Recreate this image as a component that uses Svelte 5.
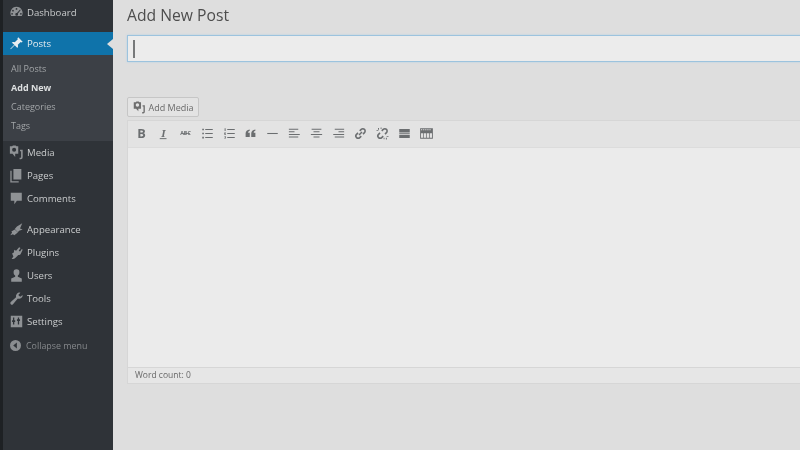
<script>
  const top = [
    { label: 'Media', icon: 'media' },
    { label: 'Pages', icon: 'pages' },
    { label: 'Comments', icon: 'comments' }
  ];
  const bottom = [
    { label: 'Appearance', icon: 'appearance' },
    { label: 'Plugins', icon: 'plugins' },
    { label: 'Users', icon: 'users' },
    { label: 'Tools', icon: 'tools' },
    { label: 'Settings', icon: 'settings' }
  ];
  const subs = ['All Posts', 'Add New', 'Categories', 'Tags'];
  const paths = {
    media: 'M1 1.500h2.500l1-1h3l1 1H10.500V10H7v3.500L4 10H1zM5.800 3a2.300 2.300 0 1 0 0 4.600 2.300 2.300 0 0 0 0-4.600zM12.500 5.500H15.500V14a2.200 2.200 0 0 1-2.200 2.200H12V14.500h1.200c.3 0 .5-.2.5-.5V7.200h-1.200z',
    pages: 'M5 1h9v12H5zM3 3v12h8v1.500H1.500V3z',
    comments: 'M2 2h12.500v9H9l-3 4v-4H2z',
    appearance: 'M9 5l6-3.500-2.500 6 3 1-4 1.500-1.500 1.500-3.500-3.500zM6.500 8.500l3.500 3.500-4 3-1.500-1-3 1 2-3-.8-1.200z',
    plugins: 'M11.500 2.500l1.500 1-2 3 1.500 1 2-3 1 1-2 4c-.5 1.500-2 2-3 1.800L8 14c-1 1.500-3 2-5 2l2-3-1.500-3.500 2-1 .5-3 2 1z',
    users: 'M8.500 1.500a3.300 3.300 0 0 1 3.300 3.500c0 1.500-1 3-1.800 3.500v1.500l4.500 2V15.500H2.500V12l4.500-2V8.500C6 8 5.200 6.500 5.200 5a3.300 3.300 0 0 1 3.300-3.500z',
    tools: 'M15.500 4.500a4 4 0 0 1-5.500 4L4.500 15a1.700 1.700 0 0 1-2.500-2.500L8 7a4 4 0 0 1 5-5l-2.500 2.500 2.200 2z',
    settings: 'M2 2h13v13H2zM4.500 4v3H3.500v2h1v3H6V9h1V7H6V4zM10 4v2H9v2h1v4h1.500V8h1V6h-1V4z'
  };
  const tools = ['b','i','abc','ul','ol','q','hr','al','ac','ar','link','unlink','more','kitchen'];
</script>

<div class="page">
  <nav class="side">
    <div class="item first">
      <svg class="ic" viewBox="0 0 17 17"><path d="M8.500 2a7 7 0 0 0-6 10.500h12A7 7 0 0 0 8.500 2zM8.500 3.500a1 1 0 1 1 0 2 1 1 0 0 1 0-2zM4.500 5.500a1 1 0 1 1 0 2 1 1 0 0 1 0-2zM12.500 5l.8.6L10 10a1.500 1.500 0 1 1-1-.8zM3.500 9a1 1 0 1 1 0 2 1 1 0 0 1 0-2zM13.500 9a1 1 0 1 1 0 2 1 1 0 0 1 0-2z" fill-rule="evenodd"/></svg>
      <span>Dashboard</span>
    </div>
    <div class="item current">
      <svg class="ic" viewBox="0 0 17 17"><path d="M10.500 1.500l5 5-1.200.8-1-.5L10 10c.5 1.500.2 2.500-.5 3.500L6.500 10.500 2 15l-.5-.5L6 10 3 7.500c1-.8 2-1 3.500-.5L10 3.700l-.5-1z"/></svg>
      <span>Posts</span>
      <i class="arrow"></i>
    </div>
    <div class="subs">
      {#each subs as s}
        <div class="sub" class:on={s === 'Add New'}>{s}</div>
      {/each}
    </div>
    {#each top as m}
      <div class="item">
        <svg class="ic" viewBox="0 0 17 17"><path d={paths[m.icon]} fill-rule="evenodd"/></svg>
        <span>{m.label}</span>
      </div>
    {/each}
    <div class="gap"></div>
    {#each bottom as m}
      <div class="item">
        <svg class="ic" viewBox="0 0 17 17"><path d={paths[m.icon]} fill-rule="evenodd"/></svg>
        <span>{m.label}</span>
      </div>
    {/each}
    <div class="collapse">
      <svg viewBox="0 0 12 12"><path d="M6 0a6 6 0 1 1 0 12A6 6 0 0 1 6 0zM7.500 2.800 3.500 6l4 3.200z" fill-rule="evenodd"/></svg>
      <span>Collapse menu</span>
    </div>
  </nav>

  <main class="main">
    <h1>Add New Post</h1>
    <div class="title"><i class="caret"></i></div>
    <button class="addmedia">
      <svg viewBox="0 0 17 17"><path d={paths.media} fill-rule="evenodd"/></svg>
      Add Media
    </button>
    <section class="editor">
      <div class="toolbar">
        {#each tools as t}
          <span class="tool">
            <svg viewBox="0 0 20 20">
              {#if t === 'b'}
                <text x="10" y="16" text-anchor="middle" class="bold">B</text>
              {:else if t === 'i'}
                <text x="10" y="15" text-anchor="middle" class="ital">I</text>
                <rect x="5" y="16.200" width="9" height="1.300"/>
              {:else if t === 'abc'}
                <text x="10" y="12.500" text-anchor="middle" class="small">ABC</text>
                <rect x="4" y="9.500" width="12" height="1"/>
              {:else if t === 'ul'}
                <path d="M3 3.500h2.200v2.200H3zM7 4h10v1.400H7zM3 8.900h2.200v2.200H3zM7 9.300h10v1.400H7zM3 14.300h2.200v2.200H3zM7 14.600h10v1.400H7z"/>
              {:else if t === 'ol'}
                <path d="M7 4h10v1.400H7zM7 9.300h10v1.400H7zM7 14.600h10v1.400H7zM3.500 3h1.300v3.500H3.500zM3 8.500h2.200v1.200L4 10.700h1.300v.8H3zM3 13.500h2.200v3.300H3v-.7h1.300v-.6H3.500v-.6h.8v-.6H3z"/>
              {:else if t === 'q'}
                <path d="M9 4.500v1.800c-1.500.6-2.200 1.400-2.200 2.600H9V14.500H3.500V9.500c0-2.600 2-4.500 5.500-5zM16.500 4.500v1.800c-1.500.6-2.200 1.400-2.200 2.600h2.200V14.500H11V9.500c0-2.600 2-4.500 5.500-5z"/>
              {:else if t === 'hr'}
                <rect x="3" y="9.300" width="14" height="1.400"/>
              {:else if t === 'al'}
                <path d="M2.500 3.500H15v1.400H2.500zM2.500 7H10v1.400H2.500zM2.500 10.500H17v1.400H2.500zM2.500 14H15v1.400H2.500z"/>
              {:else if t === 'ac'}
                <path d="M3.500 3.500h13v1.400h-13zM6 7h8v1.400H6zM2.500 10.500h15v1.400h-15zM6 14h8v1.400H6z"/>
              {:else if t === 'ar'}
                <path d="M5 3.500h12.500v1.400H5zM10 7h7.500v1.400H10zM3 10.500h14.500v1.400H3zM5 14h12.500v1.400H5z"/>
              {:else if t === 'link'}
                <g class="ln"><path d="M8 12l4-4M9 6.500l2-2a3 3 0 0 1 4.300 4.300l-2 2M11 13.500l-2 2a3 3 0 0 1-4.300-4.300l2-2"/></g>
              {:else if t === 'unlink'}
                <g class="ln"><path d="M9 6.500l2-2a3 3 0 0 1 4.300 4.300l-2 2M11 13.500l-2 2a3 3 0 0 1-4.300-4.300l2-2"/></g>
                <path d="M4 2.500h1.300v2.500H4zM2 5.500h2.500v1.200H2zM15.500 13.500H18v1.200h-2.500zM14.500 15.500h1.300V18h-1.300zM7.500 2h1.200v2H7.500zM11.500 15.800h1.200v2h-1.200z"/>
              {:else if t === 'more'}
                <path d="M3 4h14v4.500H3zM3 9.400h14v1H3zM3 11.500h14v4.500H3z"/>
              {:else}
                <path d="M1.500 3h17v14h-17zM2.700 4.200v1.500h1.600V4.200zM5.500 4.200v1.500h1.600V4.200zM8.300 4.200v1.500h1.600V4.200zM11.100 4.200v1.500h1.600V4.200zM13.900 4.200v1.500h1.600V4.200zM2.700 9.800v6h2.600v-6zM6.300 9.800v6h3v-6zM10.300 9.800v6h3v-6zM14.300 9.800v6h3v-6z" fill-rule="evenodd"/>
              {/if}
            </svg>
          </span>
        {/each}
      </div>
      <div class="body"></div>
      <div class="status">Word count: 0</div>
    </section>
  </main>
</div>

<style>
  :global(body) { margin: 0; overflow: hidden; }
  .page {
    display: flex;
    width: 800px;
    height: 450px;
    overflow: hidden;
    background: #dedede;
    font-family: "Open Sans", sans-serif;
    filter: blur(0.35px);
  }
  .side {
    width: 110px;
    flex: none;
    background: #2f3338;
    border-left: 3px solid #1e2124;
    color: #c9cbcc;
    font-size: 9.600px;
  }
  .item {
    display: flex;
    align-items: center;
    height: 23px;
    position: relative;
  }
  .item.first { padding-top: 1px; margin-bottom: 8px; }
  .ic { width: 15px; height: 15px; margin: 0 3px 0 6px; fill: #8f9295; flex: none; }
  .item.current { background: #0f73aa; color: #e6ecef; }
  .item.current .ic { fill: #e8edf0; }
  .arrow {
    position: absolute;
    right: 0;
    top: 7px;
    border: 5px solid transparent;
    border-left-width: 0;
    border-right: 6px solid #dedede;
  }
  .subs {
    background: #3c4046;
    padding: 4px 0 6px;
    font-size: 9px;
    color: #a2a5a8;
  }
  .sub { height: 19px; line-height: 19px; padding-left: 8px; }
  .sub.on { color: #dddfe0; font-weight: 700; }
  .gap { height: 8px; }
  .collapse {
    display: flex;
    align-items: center;
    height: 23px;
    margin-top: 1px;
    font-size: 8.900px;
    color: #85888b;
  }
  .collapse svg { width: 11px; height: 11px; margin: 0 5px 0 7px; fill: #8a8d90; }
  .main { flex: 1; padding-left: 14px; min-width: 0; }
  h1 {
    margin: 0;
    height: 35px;
    line-height: 30px;
    font-size: 15.700px;
    font-weight: 400;
    color: #4d4d4d;
  }
  .title {
    box-sizing: border-box;
    height: 27px;
    margin-right: -10px;
    background: #ececec;
    border: 1px solid #9cc3de;
    box-shadow: 0 0 2px #b5d2e6;
    padding: 4px 5px;
  }
  .caret { display: block; width: 1.500px; height: 18px; background: #77797a; }
  .addmedia {
    display: flex;
    align-items: center;
    box-sizing: border-box;
    height: 20px;
    margin: 35px 0 3px;
    padding: 0 4.500px;
    background: #e3e3e3;
    border: 1px solid #c6c6c6;
    border-radius: 2px;
    font: 9px "Open Sans", sans-serif;
    color: #6a6a6a;
  }
  .addmedia svg { width: 13px; height: 13px; fill: #6e6e6e; margin-right: 3px; }
  .editor {
    margin-right: -10px;
    border: 1px solid #d6d6d6;
    border-right: 0;
    background: #e6e6e6;
    height: 264px;
    display: flex;
    flex-direction: column;
    box-sizing: border-box;
  }
  .toolbar {
    display: flex;
    align-items: center;
    box-sizing: border-box;
    height: 27px;
    padding: 0 0 1px 2.500px;
    flex: none;
    border-bottom: 1px solid #dcdcdc;
    background: #e3e3e3;
  }
  .tool { width: 21.900px; height: 15px; display: flex; justify-content: center; flex: none; }
  .tool svg { width: 15px; height: 15px; fill: #6b6e70; overflow: visible; }
  .bold { font: 700 17px "Open Sans", sans-serif; }
  .ital { font: italic 700 15px "Liberation Serif", serif; }
  .small { font: 700 7px "Open Sans", sans-serif; }
  .ln { fill: none; stroke: #6b6e70; stroke-width: 2; }
  .body { flex: 1; background: #ebebeb; }
  .status {
    flex: none;
    height: 15px;
    line-height: 14px;
    padding-left: 7px;
    font-size: 8.500px;
    color: #686868;
    border-top: 1px solid #d6d6d6;
    background: #e6e6e6;
  }
</style>
